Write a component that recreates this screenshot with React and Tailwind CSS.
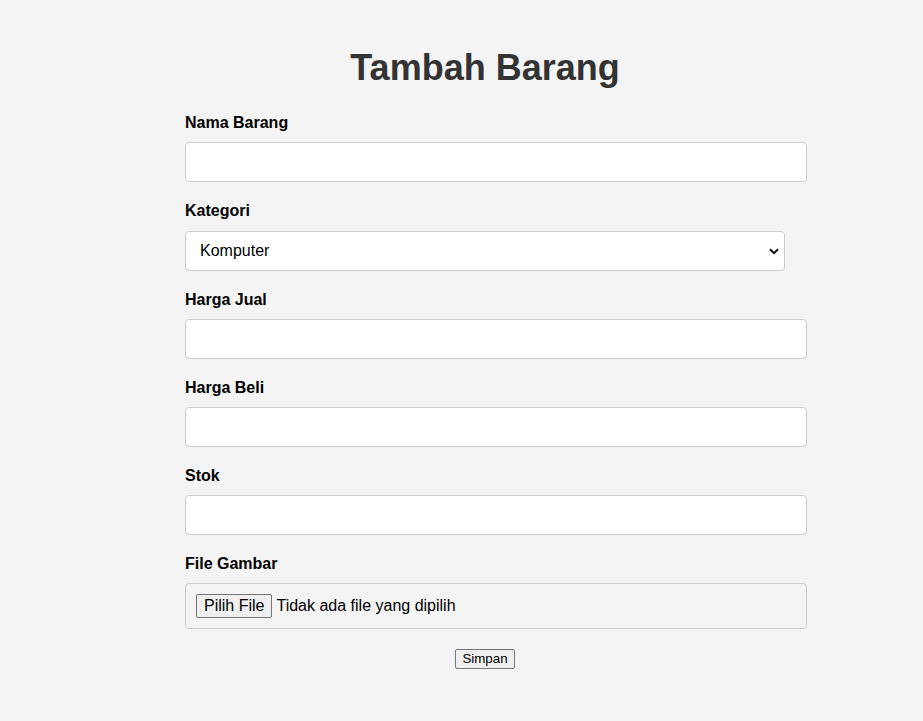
import React from "react";

function Field({ label, children }) {
  return (
    <div className="mb-[20px]">
      <label className="block text-[16px] leading-[18.2px] font-bold text-black">{label}</label>
      <div className="mt-[10px]">{children}</div>
    </div>
  );
}

function TextInput() {
  return (
    <input
      type="text"
      className="block w-[622px] h-[40px] px-[10px] bg-white border border-[#cccccc] rounded-[4px] outline-none"
    />
  );
}

export default function App() {
  return (
    <div
      className="min-h-[721px] bg-[#f4f4f4] text-black"
      style={{ fontFamily: '"Liberation Sans", Arial, sans-serif' }}
    >
      <div className="ml-[185px] w-[600px] pt-[47px]">
        <h1 className="text-center text-[36px] leading-[41.4px] font-bold text-[#333333] mb-[25.8px]">
          Tambah Barang
        </h1>
        <form onSubmit={(e) => e.preventDefault()}>
          <Field label="Nama Barang">
            <TextInput />
          </Field>
          <Field label="Kategori">
            <div className="relative w-[600px] h-[40px] bg-white border border-[#cccccc] rounded-[4px] flex items-center pl-[14px] text-[16px]">
              <span>Komputer</span>
              <svg
                className="absolute right-[5px] top-[16px]"
                width="10"
                height="7"
                viewBox="0 0 10 7"
                fill="none"
              >
                <path d="M1 1.2 L5 5.2 L9 1.2" stroke="#111" strokeWidth="2" />
              </svg>
            </div>
          </Field>
          <Field label="Harga Jual">
            <TextInput />
          </Field>
          <Field label="Harga Beli">
            <TextInput />
          </Field>
          <Field label="Stok">
            <TextInput />
          </Field>
          <Field label="File Gambar">
            <div className="w-[622px] h-[46px] px-[10px] border border-[#cccccc] rounded-[4px] bg-[#f4f4f4] flex items-center text-[16px]">
              <button
                type="button"
                className="h-[24px] px-[7px] leading-[18px] bg-[#efefef] border border-[#767676] rounded-[2px] text-black mr-[4px]"
              >
                Pilih File
              </button>
              <span>Tidak ada file yang dipilih</span>
            </div>
          </Field>
          <div className="flex justify-center">
            <button
              type="submit"
              className="h-[20px] px-[6px] text-[13.33px] leading-[16px] bg-[#efefef] border border-[#767676] rounded-[2px] text-black"
            >
              Simpan
            </button>
          </div>
        </form>
      </div>
    </div>
  );
}
